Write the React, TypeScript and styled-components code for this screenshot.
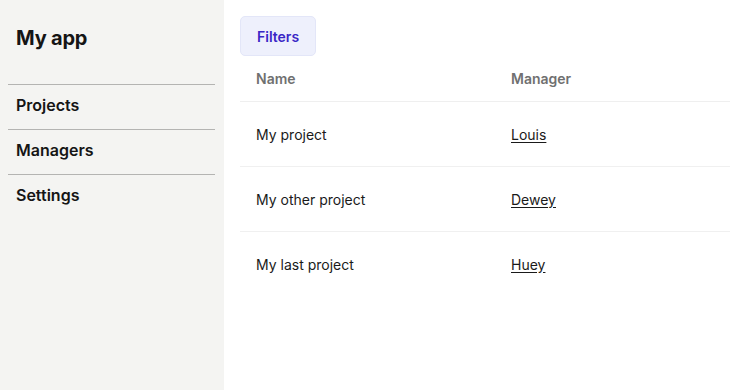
import React from "react";
import styled, { createGlobalStyle } from "styled-components";

const ROWS = [
  { name: "My project", manager: "Louis" },
  { name: "My other project", manager: "Dewey" },
  { name: "My last project", manager: "Huey" },
];

const NAV = ["Projects", "Managers", "Settings"];

export default function App() {
  return (
    <>
      <GlobalStyle />
      <Layout>
        <Sidebar>
          <Title>My app</Title>
          <Nav>
            {NAV.map((item) => (
              <NavItem key={item}>{item}</NavItem>
            ))}
          </Nav>
        </Sidebar>
        <Main>
          <FilterButton>Filters</FilterButton>
          <Table>
            <HeaderRow>
              <HeadCell>Name</HeadCell>
              <HeadCell>Manager</HeadCell>
            </HeaderRow>
            {ROWS.map((row) => (
              <Row key={row.name}>
                <Cell>{row.name}</Cell>
                <Cell>
                  <ManagerLink href="#">{row.manager}</ManagerLink>
                </Cell>
              </Row>
            ))}
          </Table>
        </Main>
      </Layout>
    </>
  );
}

const GlobalStyle = createGlobalStyle`
  html, body {
    margin: 0;
    padding: 0;
    background: #ffffff;
    font-family: Inter, "Noto Sans", sans-serif;
    color: #1a1a1a;
  }
`;

const Layout = styled.div`
  display: flex;
  min-height: 390px;
`;

const Sidebar = styled.aside`
  width: 224px;
  flex-shrink: 0;
  box-sizing: border-box;
  background: #f4f4f2;
  padding: 24px 8px 8px;
`;

const Title = styled.h1`
  margin: 0 0 32px;
  padding: 0 8px;
  font-size: 20px;
  line-height: 28px;
  font-weight: 700;
  letter-spacing: -0.2px;
  color: #151515;
`;

const Nav = styled.nav`
  display: flex;
  flex-direction: column;
  width: 207px;
`;

const NavItem = styled.div`
  border-top: 1px solid #b4b4b2;
  padding: 8px 8px 12px;
  font-size: 16px;
  line-height: 24px;
  font-weight: 600;
  color: #151515;
`;

const Main = styled.main`
  flex: 1;
  padding: 16px 0 16px 16px;
  display: flex;
  flex-direction: column;
  align-items: flex-start;
`;

const FilterButton = styled.button`
  height: 40px;
  padding: 1px 16px 0;
  border: 1px solid #e3e6f8;
  border-radius: 5px;
  background: #eef0fc;
  color: #3a27c6;
  font-family: Inter, "Noto Sans", sans-serif;
  font-size: 14px;
  font-weight: 600;
  cursor: pointer;
`;

const Table = styled.div`
  align-self: stretch;
  display: flex;
  flex-direction: column;
`;

const HeaderRow = styled.div`
  display: grid;
  grid-template-columns: 255px 1fr;
  height: 45px;
  align-items: center;
  border-bottom: 1px solid #efefef;
`;

const HeadCell = styled.div`
  padding: 0 16px;
  font-size: 14px;
  font-weight: 600;
  color: #707070;
`;

const Row = styled.div`
  display: grid;
  grid-template-columns: 255px 1fr;
  height: 64px;
  align-items: center;
  border-bottom: 1px solid #f0f0f0;

  &:last-child {
    border-bottom: none;
  }
`;

const Cell = styled.div`
  padding: 0 16px;
  font-size: 14px;
  color: #1a1a1a;
`;

const ManagerLink = styled.a`
  color: #1a1a1a;
  text-decoration: underline;
  text-underline-offset: 2px;
`;
